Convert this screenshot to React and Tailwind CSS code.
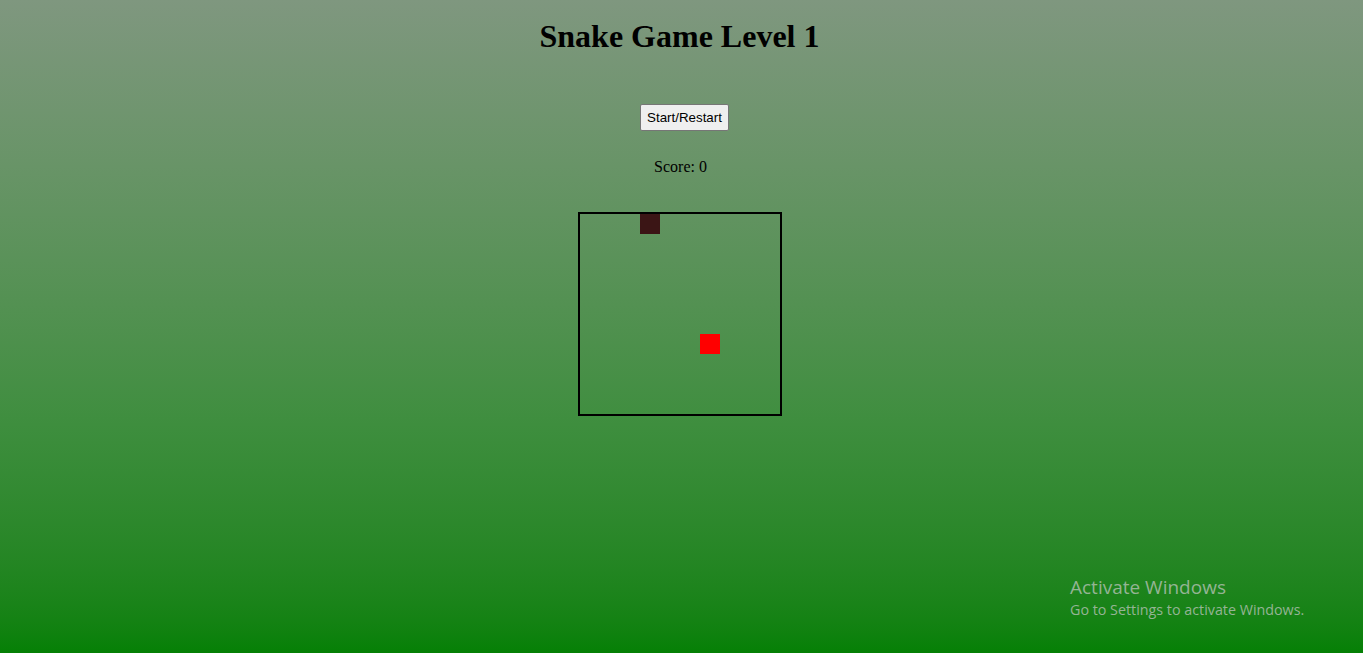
export default function App() {
  const snake = [{ x: 3, y: 0 }];
  const food = { x: 6, y: 6 };
  const cell = 20;

  return (
    <div className="relative min-h-screen w-full overflow-hidden bg-gradient-to-b from-[#7f977f] via-[#3e8e3e] via-[65%] to-[#058005] font-['Liberation_Serif',serif] text-black">
      <div className="flex flex-col items-center">
        <h1 className="mt-[18px] mr-[4px] text-[32px] font-bold leading-[37px]">Snake Game Level 1</h1>

        <button className="mt-[49px] ml-[6px] rounded-[2px] border border-[#767676] bg-[#efefef] px-[6px] py-[5px] font-['Liberation_Sans',sans-serif] text-[13.33px] leading-[15px] text-black">
          Start/Restart
        </button>

        <p className="mt-[27px] mr-[2px] text-[16px] leading-[18px]">Score: 0</p>

        <div className="relative mt-[36px] mr-[4px] h-[204px] w-[204px] border-2 border-black">
          {snake.map((s, i) => (
            <div
              key={i}
              className="absolute h-[20px] w-[20px] bg-[#3b1515]"
              style={{ left: s.x * cell, top: s.y * cell }}
            />
          ))}
          <div
            className="absolute h-[20px] w-[20px] bg-[#ff0000]"
            style={{ left: food.x * cell, top: food.y * cell }}
          />
        </div>
      </div>

      {/* Windows watermark */}
      <div className="absolute left-[1070px] top-[575px] font-['Open_Sans','Noto_Sans',sans-serif] text-[#94b494]">
        <div className="text-[19px] leading-[25px]">Activate Windows</div>
        <div className="text-[14.3px] leading-[20px]">Go to Settings to activate Windows.</div>
      </div>
    </div>
  );
}
